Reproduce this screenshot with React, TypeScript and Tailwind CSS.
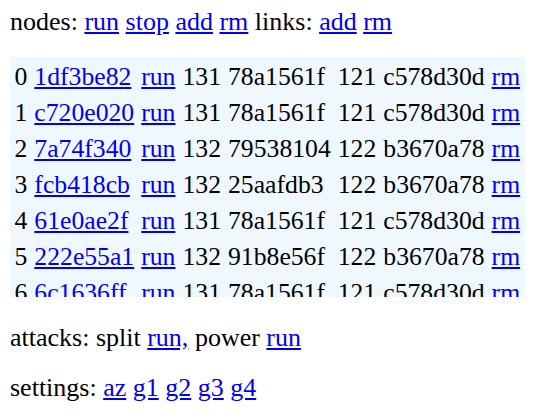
const rows = [
  ["0", "1df3be82", "131", "78a1561f", "121", "c578d30d"],
  ["1", "c720e020", "131", "78a1561f", "121", "c578d30d"],
  ["2", "7a74f340", "132", "79538104", "122", "b3670a78"],
  ["3", "fcb418cb", "132", "25aafdb3", "122", "b3670a78"],
  ["4", "61e0ae2f", "131", "78a1561f", "121", "c578d30d"],
  ["5", "222e55a1", "132", "91b8e56f", "122", "b3670a78"],
  ["6", "6c1636ff", "131", "78a1561f", "121", "c578d30d"],
]

function A({ children }: { children: React.ReactNode }) {
  return (
    <a href="#" className="text-[#0000ee] underline">
      {children}
    </a>
  )
}

export default function App() {
  return (
    <div
      className="min-h-screen bg-white text-black pl-[10px] pt-[7px]"
      style={{ fontFamily: '"Liberation Serif", "Times New Roman", serif' }}
    >
      <p className="text-[26px] leading-[30px] whitespace-nowrap">
        nodes: <A>run</A> <A>stop</A> <A>add</A> <A>rm</A> links: <A>add</A> <A>rm</A>
      </p>

      <div className="mt-[20px] w-[515px] h-[240px] overflow-hidden bg-[#f0f8ff] pl-[4.5px] pt-[2px]">
        <div className="grid grid-cols-[repeat(8,auto)] justify-start gap-x-[7px] text-[25.7px] leading-[36px] whitespace-nowrap">
          {rows.map((r) => (
            <div key={r[0]} className="contents">
              <span>{r[0]}</span>
              <span><A>{r[1]}</A></span>
              <span><A>run</A></span>
              <span>{r[2]}</span>
              <span>{r[3]}</span>
              <span>{r[4]}</span>
              <span>{r[5]}</span>
              <span><A>rm</A></span>
            </div>
          ))}
        </div>
      </div>

      <p className="mt-[26px] text-[26px] leading-[30px] whitespace-nowrap">
        attacks: split <A>run,</A> power <A>run</A>
      </p>
      <p className="mt-[20px] text-[26px] leading-[30px] whitespace-nowrap">
        settings: <A>az</A> <A>g1</A> <A>g2</A> <A>g3</A> <A>g4</A>
      </p>
    </div>
  )
}
